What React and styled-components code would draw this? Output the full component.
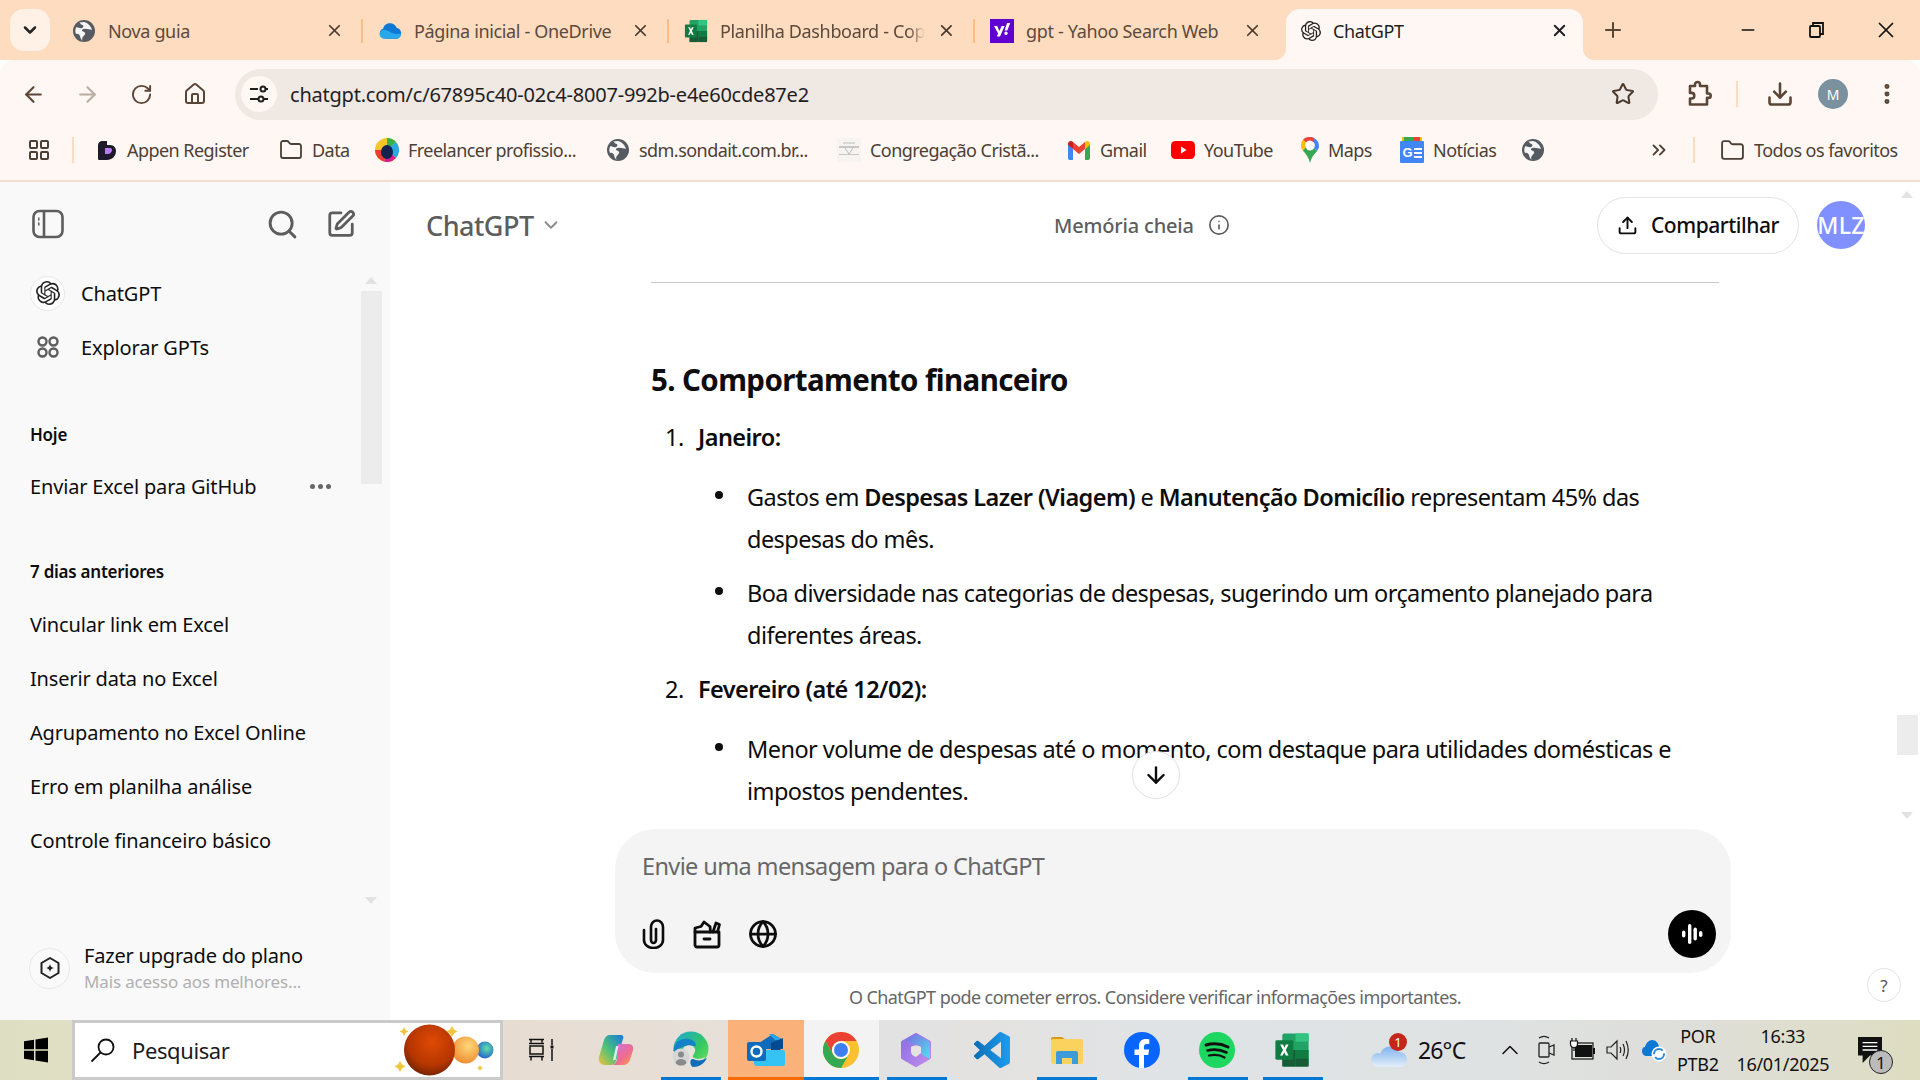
import React from 'react';
import styled, { createGlobalStyle } from 'styled-components';
import {
  ArrowLeft, ArrowRight, RotateCw, Home, Star, Download, MoreVertical, Folder,
  ChevronDown, ChevronsRight, Plus, X, Minus, Search, SquarePen, Info, Globe, ArrowDown,
  LayoutGrid, Upload, ChevronUp,
} from 'lucide-react';
import { SiOpenai } from 'react-icons/si';

const GlobalStyle = createGlobalStyle`
  html, body { margin: 0; padding: 0; }
  body { font-family: "Noto Sans", "Open Sans", "Liberation Sans", sans-serif; color: #0d0d0d; }
  * { box-sizing: border-box; }
`;

const Screen = styled.div`
  width: 1920px;
  height: 1080px;
  display: flex;
  flex-direction: column;
  overflow: hidden;
  background: #fff;
  position: relative;
`;

/* browser chrome */
const TabStrip = styled.div`
  height: 60px;
  background: #fedcbf;
  display: flex;
  align-items: flex-end;
  padding-left: 10px;
  flex-shrink: 0;
`;

const TabListButton = styled.div`
  width: 40px;
  height: 42px;
  margin: 0 7px 9px 0;
  border-radius: 14px;
  background: #fff1e6;
  display: flex;
  align-items: center;
  justify-content: center;
`;

const Tab = styled.div`
  position: relative;
  width: ${(p) => p.$w}px;
  height: 51px;
  margin-right: ${(p) => p.$mr || 0}px;
  padding: 0 ${(p) => (p.$active ? 14 : 19)}px 8px ${(p) => (p.$active ? 13 : 15)}px;
  display: flex;
  align-items: center;
  gap: ${(p) => (p.$active ? 10 : 12)}px;
  font-size: 18px;
  letter-spacing: -0.35px;
  color: ${(p) => (p.$active ? '#1f1f1f' : '#5b4a3d')};
  background: ${(p) => (p.$active ? '#fff7f3' : 'transparent')};
  border-radius: 14px 14px 0 0;
  ${(p) => p.$sep && `
    &::after {
      content: '';
      position: absolute;
      right: 0;
      top: 10px;
      width: 2px;
      height: 24px;
      background: #fbbd84;
    }
  `}
  ${(p) => p.$active && `
    &::before, & > .corner {
      content: '';
      position: absolute;
      bottom: 0;
      left: -12px;
      width: 12px;
      height: 12px;
      background: radial-gradient(circle at 0 0, transparent 12px, #fff7f3 12.5px);
    }
    & > .corner {
      left: auto;
      right: -12px;
      background: radial-gradient(circle at 100% 0, transparent 12px, #fff7f3 12.5px);
    }
  `}
`;

const TabIcon = styled.span`
  width: 24px;
  height: 24px;
  flex-shrink: 0;
  display: flex;
  align-items: center;
  justify-content: center;
`;

const TabTitle = styled.span`
  flex: 1;
  white-space: nowrap;
  ${(p) => p.$fade && `
    -webkit-mask-image: linear-gradient(90deg, #000 92%, transparent);
    mask-image: linear-gradient(90deg, #000 92%, transparent);
  `}
`;

const NewTab = styled.div`
  width: 60px;
  height: 51px;
  padding-bottom: 9px;
  display: flex;
  align-items: center;
  justify-content: center;
`;

const WindowControls = styled.div`
  margin-left: auto;
  height: 60px;
  display: flex;
  align-items: center;
`;

const WindowButton = styled.div`
  width: 69px;
  height: 60px;
  display: flex;
  align-items: center;
  justify-content: center;
`;

const Toolbar = styled.div`
  height: 60px;
  flex-shrink: 0;
  background: #fff7f3;
  border-radius: 14px 14px 0 0;
  display: flex;
  align-items: center;
  padding: 8px 0 0 6px;
  color: #5a4636;
`;

const NavButton = styled.div`
  width: 54px;
  height: 48px;
  flex-shrink: 0;
  display: flex;
  align-items: center;
  justify-content: center;
  color: ${(p) => (p.$off ? '#b9aca2' : '#5a4636')};
`;

const ExtensionButton = styled(NavButton)`
  margin-left: 14px;
`;

const Omnibox = styled.div`
  width: 1423px;
  height: 51px;
  margin-left: 13px;
  border-radius: 26px;
  background: #f0e8e3;
  display: flex;
  align-items: center;
  padding: 0 23px 0 6px;
`;

const SiteInfo = styled.div`
  width: 36px;
  height: 36px;
  border-radius: 50%;
  background: #fff7f3;
  display: flex;
  align-items: center;
  justify-content: center;
  margin-right: 13px;
`;

const Url = styled.div`
  flex: 1;
  font-size: 20px;
  letter-spacing: -0.22px;
  color: #1f1f1f;
`;

const ToolDivider = styled.div`
  width: 2px;
  height: 26px;
  background: #fbdcc2;
  margin: ${(p) => p.$m || '0'};
`;

const ProfileDot = styled.div`
  width: 30px;
  height: 30px;
  border-radius: 50%;
  background: #7a929f;
  color: #fff;
  font-size: 14px;
  display: flex;
  align-items: center;
  justify-content: center;
  margin: 0 26px 0 24px;
`;

const Bookmarks = styled.div`
  height: 62px;
  flex-shrink: 0;
  background: #fff7f3;
  border-bottom: 2px solid #f3dfd0;
  display: flex;
  align-items: center;
  padding-left: 27px;
  font-size: 18px;
  letter-spacing: -0.55px;
  color: #4c3f35;
  white-space: nowrap;
`;

const Bookmark = styled.div`
  width: ${(p) => p.$w}px;
  display: flex;
  align-items: center;
  gap: 9px;
  flex-shrink: 0;
`;

/* page body */
const Body = styled.div`
  flex: 1;
  min-height: 0;
  display: flex;
`;

const Sidebar = styled.aside`
  width: 390px;
  flex-shrink: 0;
  background: #f9f9f9;
  position: relative;
  display: flex;
  flex-direction: column;
  padding: 0 0 0 30px;
`;

const SideTop = styled.div`
  height: 84px;
  display: flex;
  align-items: center;
  color: #5d5d5d;
  padding: 0 34px 0 2px;
`;

const SideTopRight = styled.div`
  margin-left: auto;
  display: flex;
  align-items: center;
  gap: 27px;
`;

const SideRow = styled.div`
  height: 54px;
  display: flex;
  align-items: center;
  font-size: 20px;
  letter-spacing: -0.16px;
  gap: ${(p) => p.$gap || 0}px;
  padding-left: ${(p) => p.$pl || 0}px;
`;

const GptBadge = styled.div`
  width: 35px;
  height: 35px;
  border-radius: 50%;
  border: 1px solid #e8e8e8;
  background: #fff;
  display: flex;
  align-items: center;
  justify-content: center;
`;

const SideLabel = styled.div`
  font-size: 17px;
  font-weight: 600;
  letter-spacing: -0.25px;
  height: 30px;
  line-height: 30px;
  margin: ${(p) => p.$m};
`;

const RowDots = styled.span`
  position: absolute;
  left: 310px;
  display: flex;
  gap: 3px;
  & > i {
    width: 5px;
    height: 5px;
    border-radius: 50%;
    background: #666;
  }
`;

const Upgrade = styled.div`
  margin-top: auto;
  margin-left: -1px;
  height: 76px;
  margin-bottom: 14px;
  display: flex;
  align-items: center;
  gap: 14px;
`;

const UpgradeBadge = styled(GptBadge)`
  width: 41px;
  height: 41px;
  background: #fafafa;
`;

const UpgradeTitle = styled.div`
  font-size: 20px;
  letter-spacing: -0.2px;
  line-height: 28px;
`;

const UpgradeSub = styled.div`
  font-size: 17px;
  letter-spacing: -0.15px;
  line-height: 24px;
  color: #b0b0b0;
`;

const ScrollThumb = styled.div`
  position: absolute;
  left: ${(p) => p.$x}px;
  top: ${(p) => p.$y}px;
  width: 21px;
  height: ${(p) => p.$h}px;
  background: #ececec;
`;

const ScrollArrow = styled.div`
  position: absolute;
  left: ${(p) => p.$x + 4}px;
  top: ${(p) => p.$y}px;
  width: 0;
  height: 0;
  border-left: 6px solid transparent;
  border-right: 6px solid transparent;
  ${(p) => (p.$down ? 'border-top: 7px solid #e2e2e2;' : 'border-bottom: 7px solid #e2e2e2;')}
`;

const Main = styled.main`
  flex: 1;
  min-width: 0;
  position: relative;
  display: flex;
  flex-direction: column;
`;

const Header = styled.header`
  height: 86px;
  flex-shrink: 0;
  display: flex;
  align-items: center;
  padding: 0 55px 0 36px;
`;

const ModelName = styled.div`
  display: flex;
  align-items: center;
  gap: 6px;
  font-size: 27px;
  font-weight: 500;
  letter-spacing: -0.5px;
  color: #5d5d5d;
  width: 628px;
`;

const MemoryNote = styled.div`
  display: flex;
  align-items: center;
  gap: 14px;
  font-size: 20px;
  font-weight: 500;
  letter-spacing: -0.18px;
  color: #5d5d5d;
`;

const ShareButton = styled.div`
  margin-left: auto;
  width: 202px;
  height: 57px;
  border: 1px solid #e3e3e3;
  border-radius: 29px;
  display: flex;
  align-items: center;
  justify-content: center;
  gap: 13px;
  font-size: 21px;
  font-weight: 500;
  letter-spacing: -0.45px;
`;

const UserAvatar = styled.div`
  width: 48px;
  height: 48px;
  border-radius: 50%;
  background: #8091ff;
  color: #fff;
  font-size: 23px;
  font-weight: 500;
  letter-spacing: 0.3px;
  display: flex;
  align-items: center;
  justify-content: center;
  margin-left: 18px;
  white-space: nowrap;
`;

const Thread = styled.div`
  flex: 1;
  min-height: 0;
  overflow: hidden;
  padding-left: 261px;
`;

const Article = styled.div`
  width: 1068px;
  font-size: 23.5px;
  line-height: 42px;
  letter-spacing: -0.56px;
`;

const Rule = styled.hr`
  border: 0;
  border-top: 1px solid #c8c8c8;
  margin: 14px 0 0;
`;

const Heading = styled.h3`
  font-size: 29.5px;
  font-weight: 700;
  line-height: 42px;
  letter-spacing: -0.6px;
  margin: 76px 0 15px;
`;

const NumList = styled.div`
  display: flex;
  flex-direction: column;
`;

const NumItem = styled.div`
  position: relative;
  padding-left: 47px;
  font-weight: 600;
  margin-bottom: ${(p) => p.$mb || 0}px;
  &::before {
    content: '${(p) => p.$n}.';
    position: absolute;
    left: 14px;
    font-weight: 400;
  }
`;

const Bullet = styled.div`
  position: relative;
  padding-left: 96px;
  margin-bottom: 12px;
  &::before {
    content: '';
    position: absolute;
    left: 64px;
    top: 15px;
    width: 8px;
    height: 8px;
    border-radius: 50%;
    background: #0d0d0d;
  }
  & b { font-weight: 600; }
`;

const Composer = styled.div`
  width: 1116px;
  height: 144px;
  margin-left: 225px;
  flex-shrink: 0;
  border-radius: 40px;
  background: #f4f4f4;
  display: flex;
  flex-direction: column;
  padding: 18px 15px 15px 27px;
`;

const Placeholder = styled.div`
  font-size: 23.5px;
  line-height: 38px;
  letter-spacing: -0.62px;
  color: #676767;
`;

const ComposerActions = styled.div`
  margin-top: auto;
  display: flex;
  align-items: center;
  gap: 26px;
`;

const VoiceButton = styled.div`
  margin-left: auto;
  width: 48px;
  height: 48px;
  border-radius: 50%;
  background: #000;
  display: flex;
  align-items: center;
  justify-content: center;
`;

const Disclaimer = styled.div`
  height: 47px;
  flex-shrink: 0;
  display: flex;
  align-items: center;
  justify-content: center;
  font-size: 18px;
  letter-spacing: -0.58px;
  color: #666;
`;

const ScrollDown = styled.div`
  position: absolute;
  left: 742px;
  top: 569px;
  width: 48px;
  height: 48px;
  border-radius: 50%;
  background: #fff;
  border: 1px solid #e0e0e0;
  display: flex;
  align-items: center;
  justify-content: center;
`;

const HelpButton = styled.div`
  position: absolute;
  right: 19px;
  bottom: 18px;
  width: 34px;
  height: 34px;
  border-radius: 50%;
  border: 1px solid #e3e3e3;
  display: flex;
  align-items: center;
  justify-content: center;
  font-size: 17px;
  color: #555;
`;

/* windows taskbar */
const Taskbar = styled.div`
  height: 60px;
  flex-shrink: 0;
  display: flex;
  align-items: stretch;
  background: linear-gradient(90deg, #dedfc2 0%, #e7ddd3 28%, #e6e2dd 45%, #dfe3e6 62%, #dfe2e2 78%, #dededa 88%, #deddc2 100%);
  color: #111;
`;

const StartButton = styled.div`
  width: 72px;
  display: flex;
  align-items: center;
  justify-content: center;
`;

const SearchBox = styled.div`
  width: 431px;
  background: #fff;
  border: 3px solid #cacaca;
  display: flex;
  align-items: center;
  padding-left: 15px;
  gap: 16px;
  font-size: 22px;
  letter-spacing: -0.4px;
  color: #1b1b1b;
`;

const PlanetSlot = styled.span`
  margin-left: auto;
  display: flex;
`;

const TaskViewCell = styled.div`
  width: 75px;
  display: flex;
  align-items: center;
  justify-content: center;
`;

const AppCell = styled.div`
  position: relative;
  width: 75.2px;
  display: flex;
  align-items: center;
  justify-content: center;
  background: ${(p) => p.$bg || 'transparent'};
  &::after {
    content: '';
    display: ${(p) => (p.$line ? 'block' : 'none')};
    position: absolute;
    bottom: 0;
    left: ${(p) => (p.$wide ? 0 : 8)}px;
    right: ${(p) => (p.$wide ? 0 : 7)}px;
    height: 3px;
    background: ${(p) => p.$line};
  }
`;

const Weather = styled.div`
  width: 162px;
  display: flex;
  align-items: center;
  padding-left: 41px;
  gap: 11px;
  font-size: 23px;
  letter-spacing: -0.8px;
`;

const TrayCell = styled.div`
  width: ${(p) => p.$w}px;
  padding-right: ${(p) => p.$pr || 0}px;
  display: flex;
  align-items: center;
  justify-content: center;
  position: relative;
`;

const LangClock = styled.div`
  width: ${(p) => p.$w}px;
  display: flex;
  flex-direction: column;
  align-items: center;
  justify-content: center;
  font-size: 18px;
  letter-spacing: -0.3px;
  line-height: 28px;
  white-space: nowrap;
`;

const NotifyCount = styled.div`
  position: absolute;
  left: 25px;
  top: 30px;
  width: 24px;
  height: 24px;
  border-radius: 50%;
  background: #bbb;
  border: 1.5px solid #222;
  font-size: 17px;
  line-height: 1;
  display: flex;
  align-items: center;
  justify-content: center;
`;

/* little drawings */
const DarkGlobe = ({ s = 24, c = '#555b60' }) => (
  <svg width={s} height={s} viewBox="0 0 24 24">
    <circle cx="12" cy="12" r="11" fill={c} />
    <path d="M8 2.500c-.5 2 .8 3 2.500 3.500 1.600.5 1 2.500-.5 3-1.700.5-3.500 0-5.500-1C3 10 3 13 4 15c2-1 3.500.5 4 2 .3 1.500 1 3.500 2.500 5-1-3 .5-4.500 2-6 1.500-1.500.5-3-1.500-3.500-1.500-.4-1.500-2 .5-2.500 3-.7 6 .5 8.500 1-1-4-4-7-8-8-1.500 0-3 .2-4.500.5z" fill="#fff" opacity=".95" />
  </svg>
);

const OneDriveIcon = ({ s = 26 }) => (
  <svg width={s} height={s} viewBox="0 0 28 28">
    <path d="M11 23c-5 0-9-2-9-6 0-3 2-5 4-5.500C7 7 10.500 5 14 5c3.500 0 6.500 2 8 5.500 3 .5 5 3 5 6 0 4-3 6.500-6 6.500z" fill="#0f78d4" />
    <path d="M8 23c-3.500 0-6-2-6-5.500 0-3 2.500-5 5-5 5 0 9 5 15 5l5-.5c0 3.500-3 6-6 6z" fill="#28a8ea" />
  </svg>
);

const ExcelIcon = ({ s = 26 }) => (
  <svg width={s} height={s} viewBox="0 0 26 26">
    <rect x="6" y="1" width="19" height="24" rx="1.500" fill="#21a366" />
    <rect x="15.500" y="1" width="9.500" height="6" fill="#33c481" />
    <rect x="6" y="7" width="9.500" height="6" fill="#21a366" />
    <rect x="15.500" y="13" width="9.500" height="6" fill="#107c41" />
    <rect x="6" y="13" width="9.500" height="12" fill="#185c37" />
    <rect x="15.500" y="19" width="9.500" height="6" fill="#185c37" />
    <rect x="1" y="6" width="13" height="14" rx="1" fill="#107c41" />
    <path d="M4.500 9h2l1 2.300L8.600 9h1.900L8.500 13l2 4h-2L7.400 14.600 6.300 17H4.400l2.100-4z" fill="#fff" />
  </svg>
);

const YahooIcon = () => (
  <svg width="24" height="24" viewBox="0 0 24 24">
    <rect width="24" height="24" fill="#6001d2" />
    <path d="M4 7h3.200l2.200 5 2.200-5h3.100l-4.700 10.500H6.800l1.300-2.900zM16 12.500a1.700 1.700 0 110 3.400 1.700 1.700 0 010-3.400zM17 4h3.300l-3 7.500h-2.700z" fill="#fff" />
  </svg>
);

const TuneIcon = () => (
  <svg width="22" height="22" viewBox="0 0 22 22" fill="none" stroke="#1f1f1f" strokeWidth="2">
    <path d="M2 6h8M2 16h8M16 16h4" />
    <circle cx="15" cy="6" r="2.500" />
    <path d="M17.500 6H20" />
    <circle cx="13" cy="16" r="2.500" />
  </svg>
);

const ExtensionIcon = () => (
  <svg width="28" height="30" viewBox="0 0 28 30" fill="none" stroke="#5a4636" strokeWidth="2.600" strokeLinejoin="round">
    <path d="M5 7h5V5.500a2.500 2.500 0 015 0V7h7v7.500h1.500a2.200 2.200 0 010 4.400H22v6.600H5v-6h1.500a2.800 2.800 0 000-5.600H5z" />
  </svg>
);

const AppenIcon = () => (
  <svg width="22" height="24" viewBox="0 0 22 24">
    <path d="M6 3h5v4h3c4 0 6 3 6 6 0 5-4 9-9 9H3c-1 0-1-1-1-2V7c0-2 2-4 4-4z" fill="#1d1a2b" />
    <path d="M9 10h5c1.500 0 2 1 2 2 0 2-2 4-4 4H9z" fill="#b77cf5" />
  </svg>
);

const FreelancerIcon = () => (
  <svg width="24" height="24" viewBox="0 0 24 24">
    <circle cx="12" cy="12" r="12" fill="#f7c52b" />
    <path d="M12 0a12 12 0 019 4L12 12z" fill="#35b34a" />
    <path d="M21 4a12 12 0 010 16L12 12z" fill="#27a9e1" />
    <path d="M21 20a12 12 0 01-12 3.600L12 12z" fill="#d61f8c" />
    <path d="M9 23.600A12 12 0 010 12h12z" fill="#ee3b35" />
    <ellipse cx="12" cy="14" rx="6" ry="7" fill="#14204f" />
  </svg>
);

const CongIcon = () => (
  <svg width="24" height="24" viewBox="0 0 24 24" fill="none">
    <rect width="24" height="24" fill="#f6f3f0" />
    <path d="M2 8h20v2H2zM2 16h20v1H2z" fill="#c6c6c6" />
    <path d="M8 10l4 6 4-6" stroke="#bdbdbd" />
    <path d="M6 5h12" stroke="#d8d8d8" strokeWidth="2" />
  </svg>
);

const GmailIcon = () => (
  <svg width="24" height="20" viewBox="0 0 24 20">
    <path d="M1 4v14c0 1 .7 2 2 2h3V9z" fill="#4285f4" />
    <path d="M23 4v14c0 1-.7 2-2 2h-3V9z" fill="#34a853" />
    <path d="M6 9l6 5 6-5V2l-6 5-6-5z" fill="#ea4335" />
    <path d="M1 4c0-3 3.500-4 5-2v7L1 5z" fill="#c5221f" />
    <path d="M23 4c0-3-3.500-4-5-2v7l5-4z" fill="#fbbc04" />
  </svg>
);

const YoutubeIcon = () => (
  <svg width="24" height="18" viewBox="0 0 24 18">
    <rect width="24" height="18" rx="4.500" fill="#f00" />
    <path d="M10 5.500l5.500 3.500-5.500 3.500z" fill="#fff" />
  </svg>
);

const MapsIcon = () => (
  <svg width="18" height="26" viewBox="0 0 18 26">
    <path d="M9 0a9 9 0 019 9c0 2-1 3.500-2 5l-3-3a4.500 4.500 0 00-.5-5.700z" fill="#4285f4" />
    <path d="M12.500 5.300A4.500 4.500 0 005 5.500L2 2.500A9 9 0 019 0c1 0 3 .3 4.500 1.500z" fill="#ea4335" />
    <path d="M5 5.500A4.500 4.500 0 004.700 10.500L2 13.500C.7 12 0 10.500 0 9c0-2.500.8-4.800 2-6.500z" fill="#fbbc04" />
    <path d="M4.700 10.500a4.500 4.500 0 008.300.5l3 3L9 21 2 13.500z" fill="#34a853" />
    <path d="M2 13.500C5 17 8 21 9 26c1-5 4-9 7-12-3 1-6 2-9 3z" fill="#34a853" />
    <circle cx="9" cy="9" r="3.300" fill="#fff" />
  </svg>
);

const NewsIcon = () => (
  <svg width="24" height="26" viewBox="0 0 24 26">
    <rect x="2" y="0" width="20" height="10" rx="1" fill="#fbbc04" />
    <rect x="4" y="0" width="10" height="6" fill="#34a853" />
    <rect x="14" y="0" width="6" height="5" fill="#ea4335" />
    <rect y="4" width="24" height="22" rx="1" fill="#4285f4" />
    <text x="2.500" y="20" fontFamily="Liberation Sans, sans-serif" fontSize="13" fontWeight="700" fill="#fff">G</text>
    <path d="M14 12h8M14 16h8M14 20h8" stroke="#fff" strokeWidth="2" />
  </svg>
);

const PanelIcon = () => (
  <svg width="32" height="32" viewBox="0 0 32 32" fill="none" stroke="#5d5d5d" strokeWidth="2.600">
    <rect x="1.500" y="3" width="29" height="26" rx="6" />
    <path d="M12 3v26" />
    <path d="M6 11h1.500M6 16h1.500" strokeWidth="3" />
  </svg>
);

const ExploreIcon = () => (
  <svg width="24" height="24" viewBox="0 0 24 24" fill="none" stroke="#5d5d5d" strokeWidth="2.400">
    <circle cx="6.500" cy="6.500" r="4" /><circle cx="17.500" cy="6.500" r="4" />
    <circle cx="6.500" cy="17.500" r="4" /><circle cx="17.500" cy="17.500" r="4" />
  </svg>
);

const UpgradeIcon = () => (
  <svg width="22" height="24" viewBox="0 0 22 24" fill="none" stroke="#222" strokeWidth="2">
    <path d="M11 2l8.500 5v10L11 22l-8.500-5V7z" strokeLinejoin="round" />
    <path d="M11 8c.4 2.500 1.500 3.600 4 4-2.500.4-3.600 1.500-4 4-.4-2.500-1.500-3.600-4-4 2.500-.4 3.600-1.500 4-4z" fill="#222" stroke="none" />
  </svg>
);

const ClipIcon = () => (
  <svg width="24" height="30" viewBox="0 0 24 30" fill="none" stroke="#0d0d0d" strokeWidth="2.600" strokeLinecap="round">
    <path d="M2 11v10a9.500 8 0 0019 0V8A6 6.500 0 009 8v13a2.500 3 0 005 0V10" />
  </svg>
);

const ToolsIcon = () => (
  <svg width="30" height="30" viewBox="0 0 30 30" fill="none" stroke="#0d0d0d" strokeWidth="2.800" strokeLinejoin="round" strokeLinecap="round">
    <path d="M3 13h24v13a2 2 0 01-2 2H5a2 2 0 01-2-2z" />
    <path d="M3 13V9l6-1.500L12 3l6 4.500 .5 5.500M21 13l3-9 3.500 1.500L25.500 13" />
    <path d="M12 20h6" />
  </svg>
);

const VoiceBars = () => (
  <svg width="26" height="26" viewBox="0 0 26 26" fill="#fff">
    <rect x="3" y="9.500" width="3.400" height="7" rx="1.700" />
    <rect x="9" y="3" width="3.400" height="20" rx="1.700" />
    <rect x="14.500" y="6.500" width="3.400" height="13" rx="1.700" />
    <rect x="20" y="10" width="3.400" height="6" rx="1.700" />
  </svg>
);

const WindowsLogo = () => (
  <svg width="26" height="26" viewBox="0 0 26 26" fill="#000">
    <path d="M1 4.200l10-1.500v9.500H1zM12.500 2.500L25 .5v11.700H12.500zM1 13.700h10v9.600L1 21.800zM12.500 13.700H25v11.800l-12.500-1.900z" />
  </svg>
);

const LensIcon = () => (
  <svg width="26" height="26" viewBox="0 0 26 26" fill="none" stroke="#111" strokeWidth="1.800">
    <circle cx="16" cy="10" r="7.500" />
    <path d="M10.500 15.500L1.500 24.500" />
  </svg>
);

const PlanetArt = () => (
  <svg width="106" height="54" viewBox="0 0 106 54">
    <defs>
      <radialGradient id="mars" cx="55%" cy="35%" r="70%">
        <stop offset="0%" stopColor="#e04a06" />
        <stop offset="65%" stopColor="#b53600" />
        <stop offset="100%" stopColor="#6a2000" />
      </radialGradient>
      <radialGradient id="sun" cx="60%" cy="35%" r="70%">
        <stop offset="0%" stopColor="#ffd87a" />
        <stop offset="100%" stopColor="#ee8a2e" />
      </radialGradient>
      <radialGradient id="earth" cx="60%" cy="40%" r="65%">
        <stop offset="0%" stopColor="#5fe0a8" />
        <stop offset="100%" stopColor="#1f5fd0" />
      </radialGradient>
    </defs>
    <circle cx="91" cy="27" r="8.500" fill="url(#earth)" />
    <circle cx="71.500" cy="27" r="13.500" fill="url(#sun)" />
    <circle cx="35.500" cy="27" r="25.500" fill="url(#mars)" />
    <path d="M10 4l1.500 3 3 1.500-3 1.500L10 13l-1.500-3-3-1.500 3-1.500zM58 3l2 3.500 3.500 2-3.500 2L58 14l-2-3.500-3.500-2 3.500-2zM6 38l2 3.500 3.500 2-3.500 2L6 49l-2-3.500-3.500-2 3.500-2zM86 42l1 2 2 1-2 1-1 2-1-2-2-1 2-1z" fill="#f2c53d" />
  </svg>
);

const TaskViewIcon = () => (
  <svg width="26" height="24" viewBox="0 0 26 24" fill="none" stroke="#111" strokeWidth="1.500">
    <path d="M1 1.500h15M3 1.500v3M14 1.500v3M1 5.500h15M2 8h13v8H2zM1 18.500h15M3 18.500v4M14 18.500v4M24 1v6M24 11v12" />
    <rect x="22.500" y="7.500" width="3" height="3" fill="#111" stroke="none" />
  </svg>
);

const CopilotIcon = () => (
  <svg width="36" height="36" viewBox="0 0 36 36">
    <defs>
      <linearGradient id="cpA" x1="0" y1="1" x2="1" y2="0">
        <stop offset="0%" stopColor="#f3c23a" /><stop offset="45%" stopColor="#4cc277" /><stop offset="100%" stopColor="#1678e0" />
      </linearGradient>
      <linearGradient id="cpB" x1="0" y1="0" x2="1" y2="1">
        <stop offset="0%" stopColor="#c86ff0" /><stop offset="60%" stopColor="#ef6d8f" /><stop offset="100%" stopColor="#f7a13c" />
      </linearGradient>
    </defs>
    <path d="M12 3h11c2 0 3 2 2 4l-7 22c-1 3-3 4-5 4H7C2 33 0 29 1 25l5-17c1-3 3-5 6-5z" fill="url(#cpA)" />
    <path d="M20 12h11c3 0 5 3 4 6l-3 10c-1 3-4 5-7 5H13c3 0 5-2 6-5z" fill="url(#cpB)" />
    <path d="M18 14l-3 14h2.500l3-14z" fill="#fff" opacity=".8" />
  </svg>
);

const EdgeIcon = () => (
  <svg width="38" height="38" viewBox="0 0 38 38">
    <defs>
      <linearGradient id="edA" x1="0" y1="0" x2="1" y2="1">
        <stop offset="0%" stopColor="#1aa6d8" /><stop offset="60%" stopColor="#36c95f" /><stop offset="100%" stopColor="#7be06b" />
      </linearGradient>
    </defs>
    <circle cx="19" cy="18" r="17.500" fill="url(#edA)" />
    <path d="M1.500 20C2 10 10 7 17 8c5 1 7 4 7 7h-9c-3 0-8 1-9 6z" fill="#1482c8" />
    <path d="M12 16c4-3 10-2 11 2s-3 6-2 8 7 3 12 0c-3 6-8 10-14 10-6 0-10-3-9-10 0-4 0-7 2-10z" fill="#e6e2dc" />
    <path d="M21 36c6 0 11-3 14-9-5 3-10 3-14 1-3-1-4 6 0 8z" fill="#0f6cb6" />
    <circle cx="9" cy="26" r="8.500" fill="#d6d6d6" />
    <circle cx="9" cy="23.500" r="3" fill="#8a8a8a" />
    <path d="M3.500 32c.5-3 3-4 5.500-4s5 1 5.500 4c-1.500 2-3.500 2.500-5.500 2.500S5 34 3.500 32z" fill="#8a8a8a" />
  </svg>
);

const OutlookIcon = () => (
  <svg width="38" height="34" viewBox="0 0 38 34">
    <path d="M12 10l14-9 10 6v9H12z" fill="#0f6cbd" />
    <path d="M22 1h4l10 6H28z" fill="#28a8ea" />
    <path d="M24 10l12-5v10L24 22z" fill="#064a8c" />
    <path d="M7 17h29a2 2 0 012 2v12a2 2 0 01-2 2H10a3 3 0 01-3-3z" fill="#35c3f5" />
    <rect x="0" y="9" width="19" height="19" rx="2" fill="#0f6cbd" />
    <circle cx="9.500" cy="18.500" r="5" fill="none" stroke="#fff" strokeWidth="2.400" />
  </svg>
);

const ChromeIcon = () => (
  <svg width="36" height="36" viewBox="0 0 36 36">
    <circle cx="18" cy="18" r="18" fill="#fbc02d" />
    <path d="M18 9h15.600A18 18 0 002.400 9l7.800 13.500A9 9 0 0118 9z" fill="#ea4335" />
    <path d="M2.400 9l7.800 13.500a9 9 0 0015.600 0L18 36A18 18 0 012.400 9z" fill="#34a853" />
    <circle cx="18" cy="18" r="9" fill="#fff" />
    <circle cx="18" cy="18" r="7" fill="#3d7ff0" />
  </svg>
);

const M365Icon = () => (
  <svg width="32" height="36" viewBox="0 0 32 36">
    <defs>
      <linearGradient id="m3A" x1="0" y1="0" x2="1" y2="1">
        <stop offset="0%" stopColor="#8a6fe8" /><stop offset="100%" stopColor="#c18be8" />
      </linearGradient>
      <linearGradient id="m3B" x1="0" y1="0" x2="1" y2="1">
        <stop offset="0%" stopColor="#7a6fe0" /><stop offset="100%" stopColor="#53dbf0" />
      </linearGradient>
    </defs>
    <path d="M16 3l13 7.500v15L16 33 3 25.500v-15z" fill="url(#m3A)" stroke="url(#m3A)" strokeWidth="4" strokeLinejoin="round" />
    <path d="M16 3l13 7.500v15l-7-4V15c0-2-3-4-6-3L7 8z" fill="url(#m3B)" stroke="url(#m3B)" strokeWidth="2" strokeLinejoin="round" />
    <path d="M11 15c3-2 7-2 10 0v6l-5 4c-3-1-5-3-5-5z" fill="#e6e4e2" />
  </svg>
);

const VscodeIcon = () => (
  <svg width="36" height="36" viewBox="0 0 24 24">
    <defs>
      <linearGradient id="vsA" x1="0" y1="0" x2="1" y2="0">
        <stop offset="0%" stopColor="#0a6fb5" /><stop offset="100%" stopColor="#1f9cf0" />
      </linearGradient>
    </defs>
    <path d="M23.150 2.587L18.210.21a1.494 1.494 0 0 0-1.705.29l-9.460 8.630-4.120-3.128a.999.999 0 0 0-1.276.057L.327 7.261A1 1 0 0 0 .326 8.740L3.899 12 .326 15.260a1 1 0 0 0 .001 1.479L1.650 17.940a.999.999 0 0 0 1.276.057l4.120-3.128 9.460 8.630a1.492 1.492 0 0 0 1.704.29l4.942-2.377A1.500 1.500 0 0 0 24 20.060V3.939a1.500 1.500 0 0 0-.850-1.352zm-5.146 14.861L10.826 12l7.178-5.448v10.896z" fill="url(#vsA)" />
  </svg>
);

const ExplorerIcon = () => (
  <svg width="34" height="28" viewBox="0 0 34 28">
    <path d="M1 3a2 2 0 012-2h9l4 3H1z" fill="#d99b12" />
    <rect x="1" y="3" width="32" height="25" rx="2" fill="#fcd25f" />
    <path d="M6 28V17a2 2 0 012-2h18a2 2 0 012 2v11h-6v-6H12v6z" fill="#3c9bd8" />
  </svg>
);

const FacebookIcon = () => (
  <svg width="36" height="36" viewBox="0 0 36 36">
    <circle cx="18" cy="18" r="18" fill="#0866ff" />
    <path d="M15 36V23h-4.500v-5.500H15V14c0-4.500 2.700-7 6.800-7 1.500 0 3 .2 3.500.3v4.700h-2.500c-2.300 0-2.800 1.200-2.800 2.800v2.700h5.100l-.8 5.500h-4.300V36z" fill="#fff" />
  </svg>
);

const SpotifyIcon = () => (
  <svg width="36" height="36" viewBox="0 0 36 36" fill="none" stroke="#111" strokeLinecap="round">
    <circle cx="18" cy="18" r="18" fill="#1ed760" stroke="none" />
    <path d="M7 13c7-2 15-1.500 22 2" strokeWidth="3" />
    <path d="M8.500 18.500c6-1.500 13-1 19 2" strokeWidth="2.600" />
    <path d="M10 23.500c5-1 11-.8 15.500 2" strokeWidth="2.200" />
  </svg>
);

const CloudIcon = () => (
  <svg width="36" height="24" viewBox="0 0 36 24">
    <defs>
      <linearGradient id="cld" x1="0" y1="0" x2="0" y2="1">
        <stop offset="0%" stopColor="#7fb2ee" /><stop offset="100%" stopColor="#e4eefa" />
      </linearGradient>
    </defs>
    <path d="M7 24a7 7 0 010-14c1 0 2 .2 2.500.5A10 10 0 0128 9a7.500 7.500 0 011 15z" fill="url(#cld)" />
  </svg>
);

const WeatherBadge = styled.span`
  position: absolute;
  left: 18px;
  top: -10px;
  width: 18px;
  height: 18px;
  border-radius: 50%;
  background: #c4261a;
  color: #fff;
  font-size: 13px;
  line-height: 18px;
  text-align: center;
  letter-spacing: 0;
`;

const CloudWrap = styled.span`
  position: relative;
  display: flex;
  margin-top: 10px;
`;

const MeetIcon = () => (
  <svg width="22" height="30" viewBox="0 0 22 30" fill="none" stroke="#222" strokeWidth="1.300">
    <rect x="4" y="8" width="10" height="14" rx="1" />
    <path d="M14 12l5-2v10l-5-2M4 3c3-2 7-2 10 0M4 27c3 2 7 2 10 0" />
  </svg>
);

const BatteryIcon = () => (
  <svg width="26" height="26" viewBox="0 0 26 26">
    <rect x="3" y="6" width="21" height="16" fill="none" stroke="#111" strokeWidth="1.200" />
    <rect x="6" y="8" width="17" height="12" fill="#111" />
    <rect x="24" y="11" width="2" height="6" fill="#111" />
    <path d="M3 1v3M7 1v3M1.500 4h7v3a3.500 3.500 0 01-7 0zM5 10v4" stroke="#111" strokeWidth="1.200" fill="#fff" />
  </svg>
);

const SpeakerIcon = () => (
  <svg width="24" height="26" viewBox="0 0 24 26" fill="none" stroke="#222" strokeWidth="1.200">
    <path d="M2 10h4l6-6v18l-6-6H2z" />
    <path d="M15 10c1 2 1 4 0 6M18 7c2 4 2 8 0 12M21 4c3 6 3 12 0 18" />
  </svg>
);

const OneDriveSync = () => (
  <svg width="26" height="26" viewBox="0 0 26 26">
    <path d="M6 19c-3 0-5-2-5-5 0-2 1-4 3-4 1-4 4-7 7-7 4 0 6 3 7 6l-2 10z" fill="#0f78d4" />
    <circle cx="18" cy="17" r="7.500" fill="#fff" />
    <circle cx="18" cy="17" r="5" fill="none" stroke="#2a8bdb" strokeWidth="2" strokeDasharray="12 3" />
  </svg>
);

const NotifyIcon = () => (
  <svg width="24" height="26" viewBox="0 0 26 28">
    <path d="M0 0h26v20H13l-8 8v-8H0z" fill="#111" />
    <path d="M5 6h16M5 10h16M5 14h16" stroke="#fff" strokeWidth="1.400" />
  </svg>
);

const tabs = [
  { w: 306, title: 'Nova guia', icon: <DarkGlobe />, sep: true },
  { w: 306, title: 'Página inicial - OneDrive', icon: <OneDriveIcon />, sep: true },
  { w: 306, title: 'Planilha Dashboard - Cop', icon: <ExcelIcon />, sep: true, fade: true },
  { w: 306, title: 'gpt - Yahoo Search Web', icon: <YahooIcon />, mr: 5 },
];

const bookmarks = [
  { w: 183, title: 'Appen Register', icon: <AppenIcon /> },
  { w: 96, title: 'Data', icon: <Folder size={24} strokeWidth={1.8} /> },
  { w: 231, title: 'Freelancer profissio...', icon: <FreelancerIcon /> },
  { w: 231, title: 'sdm.sondait.com.br...', icon: <DarkGlobe /> },
  { w: 230, title: 'Congregação Cristã...', icon: <CongIcon /> },
  { w: 104, title: 'Gmail', icon: <GmailIcon /> },
  { w: 130, title: 'YouTube', icon: <YoutubeIcon /> },
  { w: 99, title: 'Maps', icon: <MapsIcon /> },
  { w: 121, title: 'Notícias', icon: <NewsIcon /> },
];

const recent = [
  'Vincular link em Excel',
  'Inserir data no Excel',
  'Agrupamento no Excel Online',
  'Erro em planilha análise',
  'Controle financeiro básico',
];

const apps = [
  { icon: <CopilotIcon /> },
  { icon: <EdgeIcon />, line: '#0078d4' },
  { icon: <OutlookIcon />, bg: '#fbb27a', line: '#ff6a00', wide: true },
  { icon: <ChromeIcon />, bg: '#f3f3f3', line: '#0078d4', wide: true },
  { icon: <M365Icon />, bg: '#e2e2e2', line: '#0078d4' },
  { icon: <VscodeIcon /> },
  { icon: <ExplorerIcon />, line: '#0078d4' },
  { icon: <FacebookIcon /> },
  { icon: <SpotifyIcon />, line: '#0078d4' },
  { icon: <ExcelIcon s={36} />, line: '#0078d4' },
];

export default function App() {
  return (
    <Screen>
      <GlobalStyle />

      <TabStrip>
        <TabListButton><ChevronDown size={20} strokeWidth={3} color="#222" /></TabListButton>
        {tabs.map((t) => (
          <Tab key={t.title} $w={t.w} $sep={t.sep} $mr={t.mr}>
            <TabIcon>{t.icon}</TabIcon>
            <TabTitle $fade={t.fade}>{t.title}</TabTitle>
            <X size={19} strokeWidth={2.2} color="#4a3a2e" />
          </Tab>
        ))}
        <Tab $w={297} $active>
          <span className="corner" />
          <TabIcon><SiOpenai size={20} color="#222" /></TabIcon>
          <TabTitle>ChatGPT</TabTitle>
          <X size={19} strokeWidth={2.4} color="#1f1f1f" />
        </Tab>
        <NewTab><Plus size={24} strokeWidth={2} color="#5a4636" /></NewTab>
        <WindowControls>
          <WindowButton><Minus size={20} strokeWidth={1.6} color="#111" /></WindowButton>
          <WindowButton>
            <svg width="18" height="18" viewBox="0 0 18 18" fill="none" stroke="#111" strokeWidth="1.800">
              <rect x="2" y="5" width="10" height="11" rx="1" /><path d="M5 5V2h10v11h-3" />
            </svg>
          </WindowButton>
          <WindowButton><X size={26} strokeWidth={1.6} color="#111" /></WindowButton>
        </WindowControls>
      </TabStrip>

      <Toolbar>
        <NavButton><ArrowLeft size={25} strokeWidth={2} /></NavButton>
        <NavButton $off><ArrowRight size={25} strokeWidth={2} /></NavButton>
        <NavButton><RotateCw size={23} strokeWidth={2} /></NavButton>
        <NavButton><Home size={24} strokeWidth={2} /></NavButton>
        <Omnibox>
          <SiteInfo><TuneIcon /></SiteInfo>
          <Url>chatgpt.com/c/67895c40-02c4-8007-992b-e4e60cde87e2</Url>
          <Star size={24} strokeWidth={2} color="#4a3a2e" />
        </Omnibox>
        <ExtensionButton><ExtensionIcon /></ExtensionButton>
        <ToolDivider $m="0 28px 0 10px" />
        <Download size={28} strokeWidth={2.2} />
        <ProfileDot>M</ProfileDot>
        <MoreVertical size={26} strokeWidth={2.6} />
      </Toolbar>

      <Bookmarks>
        <LayoutGrid size={24} strokeWidth={2} />
        <ToolDivider $m="0 22px 0 21px" />
        {bookmarks.map((b) => (
          <Bookmark key={b.title} $w={b.w}>{b.icon}{b.title}</Bookmark>
        ))}
        <Bookmark $w={127}><DarkGlobe /></Bookmark>
        <ChevronsRight size={22} strokeWidth={2} />
        <ToolDivider $m="0 25px 0 23px" />
        <Bookmark $w={180}><Folder size={25} strokeWidth={1.8} />Todos os favoritos</Bookmark>
      </Bookmarks>

      <Body>
        <Sidebar>
          <SideTop>
            <PanelIcon />
            <SideTopRight>
              <Search size={33} strokeWidth={2.1} />
              <SquarePen size={30} strokeWidth={2.2} />
            </SideTopRight>
          </SideTop>
          <SideRow $gap={16}>
            <GptBadge><SiOpenai size={24} color="#222" /></GptBadge>
            ChatGPT
          </SideRow>
          <SideRow $gap={21} $pl={6}>
            <ExploreIcon />
            Explorar GPTs
          </SideRow>
          <SideLabel $m="46px 0 9px">Hoje</SideLabel>
          <SideRow>
            Enviar Excel para GitHub
            <RowDots><i /><i /><i /></RowDots>
          </SideRow>
          <SideLabel $m="44px 0 10px">7 dias anteriores</SideLabel>
          {recent.map((r) => <SideRow key={r}>{r}</SideRow>)}
          <Upgrade>
            <UpgradeBadge><UpgradeIcon /></UpgradeBadge>
            <div>
              <UpgradeTitle>Fazer upgrade do plano</UpgradeTitle>
              <UpgradeSub>Mais acesso aos melhores...</UpgradeSub>
            </div>
          </Upgrade>
          <ScrollArrow $x={361} $y={95} />
          <ScrollThumb $x={361} $y={109} $h={193} />
          <ScrollArrow $x={361} $y={715} $down />
        </Sidebar>

        <Main>
          <Header>
            <ModelName>ChatGPT <ChevronDown size={22} strokeWidth={2} color="#8a8a8a" /></ModelName>
            <MemoryNote>Memória cheia <Info size={22} strokeWidth={1.8} /></MemoryNote>
            <ShareButton><Upload size={21} strokeWidth={2.2} />Compartilhar</ShareButton>
            <UserAvatar>MLZ</UserAvatar>
          </Header>

          <Thread>
            <Article>
              <Rule />
              <Heading>5. Comportamento financeiro</Heading>
              <NumList>
                <NumItem $n={1} $mb={18}>Janeiro:</NumItem>
                <Bullet>
                  Gastos em <b>Despesas Lazer (Viagem)</b> e <b>Manutenção Domicílio</b> representam 45% das despesas do mês.
                </Bullet>
                <Bullet>
                  Boa diversidade nas categorias de despesas, sugerindo um orçamento planejado para diferentes áreas.
                </Bullet>
                <NumItem $n={2} $mb={18}>Fevereiro (até 12/02):</NumItem>
                <Bullet>
                  Menor volume de despesas até o momento, com destaque para utilidades domésticas e impostos pendentes.
                </Bullet>
              </NumList>
            </Article>
          </Thread>

          <Composer>
            <Placeholder>Envie uma mensagem para o ChatGPT</Placeholder>
            <ComposerActions>
              <ClipIcon />
              <ToolsIcon />
              <Globe size={30} strokeWidth={2.2} />
              <VoiceButton><VoiceBars /></VoiceButton>
            </ComposerActions>
          </Composer>
          <Disclaimer>O ChatGPT pode cometer erros. Considere verificar informações importantes.</Disclaimer>

          <ScrollDown><ArrowDown size={26} strokeWidth={2.2} /></ScrollDown>
          <HelpButton>?</HelpButton>
          <ScrollArrow $x={1507} $y={9} />
          <ScrollThumb $x={1507} $y={533} $h={40} />
          <ScrollArrow $x={1507} $y={630} $down />
        </Main>
      </Body>

      <Taskbar>
        <StartButton><WindowsLogo /></StartButton>
        <SearchBox>
          <LensIcon />
          Pesquisar
          <PlanetSlot><PlanetArt /></PlanetSlot>
        </SearchBox>
        <TaskViewCell><TaskViewIcon /></TaskViewCell>
        {apps.map((a, i) => (
          <AppCell key={i} $bg={a.bg} $line={a.line} $wide={a.wide}>{a.icon}</AppCell>
        ))}
        <Weather>
          <CloudWrap><CloudIcon /><WeatherBadge>1</WeatherBadge></CloudWrap>
          26°C
        </Weather>
        <TrayCell $w={36}><ChevronUp size={28} strokeWidth={1.3} /></TrayCell>
        <TrayCell $w={36}><MeetIcon /></TrayCell>
        <TrayCell $w={36}><BatteryIcon /></TrayCell>
        <TrayCell $w={34}><SpeakerIcon /></TrayCell>
        <TrayCell $w={40}><OneDriveSync /></TrayCell>
        <LangClock $w={48}><span>POR</span><span>PTB2</span></LangClock>
        <LangClock $w={122}><span>16:33</span><span>16/01/2025</span></LangClock>
        <TrayCell $w={76} $pr={24}>
          <NotifyIcon />
          <NotifyCount>1</NotifyCount>
        </TrayCell>
      </Taskbar>
    </Screen>
  );
}
